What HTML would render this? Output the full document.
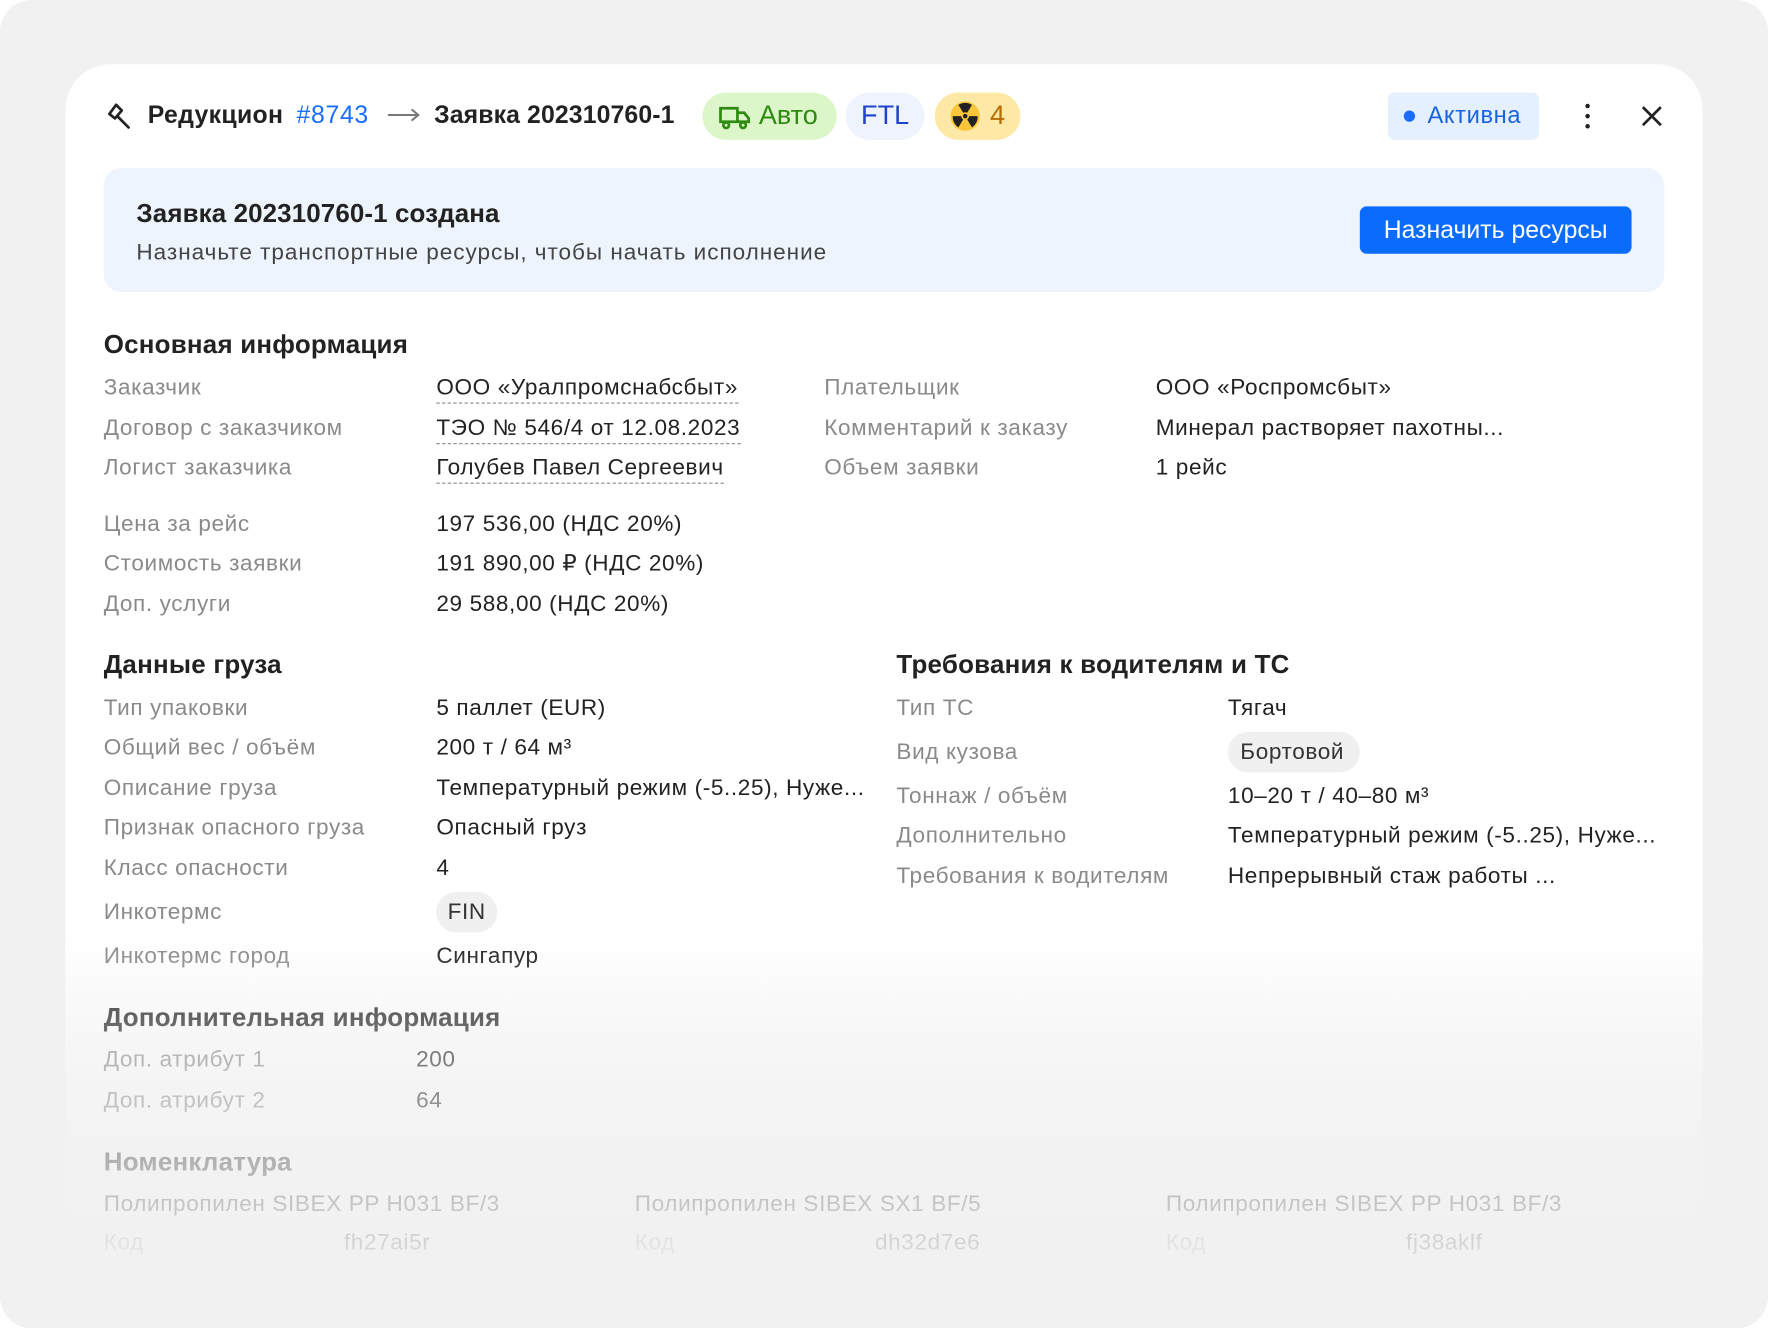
<!DOCTYPE html>
<html><head><meta charset="utf-8"><style>
html,body{margin:0;padding:0;background:#fff;width:1768px;height:1328px;overflow:hidden}
#s{position:absolute;left:0;top:0;width:1568px;height:1178px;transform:scale(1.12755);transform-origin:0 0;font-family:"Liberation Sans",sans-serif;color:#222}
.outer{position:absolute;left:0;top:0;width:1568px;height:1178px;background:#f1f1f1;border-radius:28px}
.card{position:absolute;left:58px;top:57px;width:1452px;height:1121px;background:linear-gradient(#fff 0,#fff 780px,#f3f3f3 1000px,#f1f1f1 1121px);border-radius:40px 40px 0 0}
.t{position:absolute;white-space:nowrap;font-size:20px;line-height:24px;letter-spacing:0.55px}
.l{color:#8a8a8a}
.h{font-size:23px;font-weight:bold;color:#222;letter-spacing:0.2px}
.pill{position:absolute;height:42px;top:82px;border-radius:21px;font-size:24px;line-height:42px}
.u{border-bottom:1.5px dashed #888;padding-bottom:2px}
.fade{position:absolute;left:58px;top:830px;width:1452px;height:348px;background:linear-gradient(rgba(241,241,241,0),rgba(241,241,241,.35) 80px,rgba(241,241,241,.75) 220px,rgba(241,241,241,.92) 300px)}
</style></head><body><div id="s">
<div class="outer"></div>
<div class="card"></div>
<svg style="position:absolute;left:94px;top:90px" width="26" height="26" viewBox="0 0 26 26" fill="none" stroke="#222" stroke-width="2.4" stroke-linejoin="round" stroke-linecap="round"><path d="M9 3 L3 11 L8 15 L14 8 Z"/><path d="M10 13 L20 23"/></svg>
<div class="t" style="left:131px;top:89px;font-size:22px;line-height:26px;font-weight:bold;letter-spacing:0.3px">Редукцион</div>
<div class="t" style="left:263px;top:89px;font-size:22px;line-height:26px;color:#1a6dff;letter-spacing:0.6px">#8743</div>
<svg style="position:absolute;left:343px;top:95px" width="30" height="14"><path d="M1 7 H28 M22 2 L28 7 L22 12" stroke="#777" stroke-width="1.8" fill="none"/></svg>
<div class="t" style="left:385px;top:89px;font-size:22px;line-height:26px;font-weight:bold;letter-spacing:0.1px">Заявка 202310760-1</div>
<div class="pill" style="left:623px;width:119px;background:#dcf6c9;color:#2f8a12">
<svg style="position:absolute;left:14px;top:11px" width="30" height="22" viewBox="0 0 30 22" fill="none" stroke="#2f8a12" stroke-width="2.4"><path d="M2 3 H17 V15 H2 Z M17 7 H23 L27 12 V15 H17"/><circle cx="7" cy="18" r="2.5" fill="#dcf6c9"/><circle cx="22" cy="18" r="2.5" fill="#dcf6c9"/></svg>
<span style="position:absolute;left:50px">Авто</span></div>
<div class="pill" style="left:750px;width:70px;background:#eef3fd;color:#2142c9;text-align:center">FTL</div>
<div class="pill" style="left:829px;width:76px;background:#fde8a6;color:#b66c00">
<svg style="position:absolute;left:13px;top:7px" width="28" height="28" viewBox="0 0 28 28"><circle cx="14" cy="14" r="13" fill="#f9c53a"/><path d="M14 14 L8 4 A11 11 0 0 1 20 4 Z M14 14 L25 14 A11 11 0 0 1 20 24 Z M14 14 L8 24 A11 11 0 0 1 3 14 Z" fill="#222"/><circle cx="14" cy="14" r="3.5" fill="#f9c53a"/><circle cx="14" cy="14" r="2" fill="#222"/></svg>
<span style="position:absolute;left:49px">4</span></div>
<div style="position:absolute;left:1231px;top:82px;width:134px;height:42px;background:#e4f0fd;border-radius:6px"></div>
<div style="position:absolute;left:1245px;top:98px;width:10px;height:10px;border-radius:5px;background:#1a6dff"></div>
<div class="t" style="left:1266px;top:91px;font-size:21px;color:#1a62e0">Активна</div>
<div style="position:absolute;left:1406px;top:92px;width:4px;height:4px;border-radius:2px;background:#222;box-shadow:0 9px 0 #222,0 18px 0 #222"></div>
<svg style="position:absolute;left:1455px;top:93px" width="20" height="20"><path d="M2 2 L18 18 M18 2 L2 18" stroke="#222" stroke-width="2.4"/></svg>
<div style="position:absolute;left:92px;top:149px;width:1384px;height:110px;background:#eef4fe;border-radius:16px"></div>
<div class="t" style="left:121px;top:176px;font-size:23px;line-height:26px;font-weight:bold;letter-spacing:0.1px">Заявка 202310760-1 создана</div>
<div class="t" style="left:121px;top:212px;color:#444;letter-spacing:0.85px">Назначьте транспортные ресурсы, чтобы начать исполнение</div>
<div style="position:absolute;left:1206px;top:183px;width:241px;height:42px;background:#0a6cff;border-radius:6px;color:#fff;font-size:22px;line-height:42px;text-align:center">Назначить ресурсы</div>
<div class="t h" style="left:92px;top:293px">Основная информация</div>
<div class="t l" style="left:92px;top:332px">Заказчик</div><div class="t" style="left:387px;top:332px"><span class="u">ООО «Уралпромснабсбыт»</span></div>
<div class="t l" style="left:92px;top:368px">Договор с заказчиком</div><div class="t" style="left:387px;top:368px"><span class="u">ТЭО № 546/4 от 12.08.2023</span></div>
<div class="t l" style="left:92px;top:403px">Логист заказчика</div><div class="t" style="left:387px;top:403px"><span class="u">Голубев Павел Сергеевич</span></div>
<div class="t l" style="left:731px;top:332px">Плательщик</div><div class="t" style="left:1025px;top:332px">ООО «Роспромсбыт»</div>
<div class="t l" style="left:731px;top:368px">Комментарий к заказу</div><div class="t" style="left:1025px;top:368px">Минерал растворяет пахотны...</div>
<div class="t l" style="left:731px;top:403px">Объем заявки</div><div class="t" style="left:1025px;top:403px">1 рейс</div>
<div class="t l" style="left:92px;top:453px">Цена за рейс</div><div class="t" style="left:387px;top:453px">197 536,00 (НДС 20%)</div>
<div class="t l" style="left:92px;top:488px">Стоимость заявки</div><div class="t" style="left:387px;top:488px">191 890,00 ₽ (НДС 20%)</div>
<div class="t l" style="left:92px;top:524px">Доп. услуги</div><div class="t" style="left:387px;top:524px">29 588,00 (НДС 20%)</div>
<div class="t h" style="left:92px;top:577px">Данные груза</div>
<div class="t l" style="left:92px;top:616px">Тип упаковки</div><div class="t" style="left:387px;top:616px">5 паллет (EUR)</div>
<div class="t l" style="left:92px;top:651px">Общий вес / объём</div><div class="t" style="left:387px;top:651px">200 т / 64 м³</div>
<div class="t l" style="left:92px;top:687px">Описание груза</div><div class="t" style="left:387px;top:687px">Температурный режим (-5..25), Нуже...</div>
<div class="t l" style="left:92px;top:722px">Признак опасного груза</div><div class="t" style="left:387px;top:722px">Опасный груз</div>
<div class="t l" style="left:92px;top:758px">Класс опасности</div><div class="t" style="left:387px;top:758px">4</div>
<div class="t l" style="left:92px;top:797px">Инкотермс</div><div style="position:absolute;left:387px;top:791px;width:54px;height:36px;border-radius:18px;background:#f0f0f0"></div><div class="t" style="left:397px;top:797px;color:#333">FIN</div>
<div class="t l" style="left:92px;top:836px">Инкотермс город</div><div class="t" style="left:387px;top:836px">Сингапур</div>
<div class="t h" style="left:795px;top:577px">Требования к водителям и ТС</div>
<div class="t l" style="left:795px;top:616px">Тип ТС</div><div class="t" style="left:1089px;top:616px">Тягач</div>
<div class="t l" style="left:795px;top:655px">Вид кузова</div><div style="position:absolute;left:1089px;top:649px;width:117px;height:36px;border-radius:18px;background:#f0f0f0"></div><div class="t" style="left:1100px;top:655px;color:#333">Бортовой</div>
<div class="t l" style="left:795px;top:694px">Тоннаж / объём</div><div class="t" style="left:1089px;top:694px">10–20 т / 40–80 м³</div>
<div class="t l" style="left:795px;top:729px">Дополнительно</div><div class="t" style="left:1089px;top:729px">Температурный режим (-5..25), Нуже...</div>
<div class="t l" style="left:795px;top:765px">Требования к водителям</div><div class="t" style="left:1089px;top:765px">Непрерывный стаж работы ...</div>
<div class="t h" style="left:92px;top:890px">Дополнительная информация</div>
<div class="t l" style="left:92px;top:928px">Доп. атрибут 1</div><div class="t" style="left:369px;top:928px">200</div>
<div class="t l" style="left:92px;top:964px">Доп. атрибут 2</div><div class="t" style="left:369px;top:964px">64</div>
<div class="t h" style="left:92px;top:1018px">Номенклатура</div>
<div class="t" style="left:92px;top:1056px;font-weight:500">Полипропилен SIBEX PP H031 BF/3</div>
<div class="t" style="left:563px;top:1056px">Полипропилен SIBEX SX1 BF/5</div>
<div class="t" style="left:1034px;top:1056px">Полипропилен SIBEX PP H031 BF/3</div>
<div class="t l" style="left:92px;top:1090px">Код</div><div class="t" style="left:305px;top:1090px">fh27ai5r</div>
<div class="t l" style="left:563px;top:1090px">Код</div><div class="t" style="left:776px;top:1090px">dh32d7e6</div>
<div class="t l" style="left:1034px;top:1090px">Код</div><div class="t" style="left:1247px;top:1090px">fj38aklf</div>
<div class="fade"></div>
</div></body></html>
